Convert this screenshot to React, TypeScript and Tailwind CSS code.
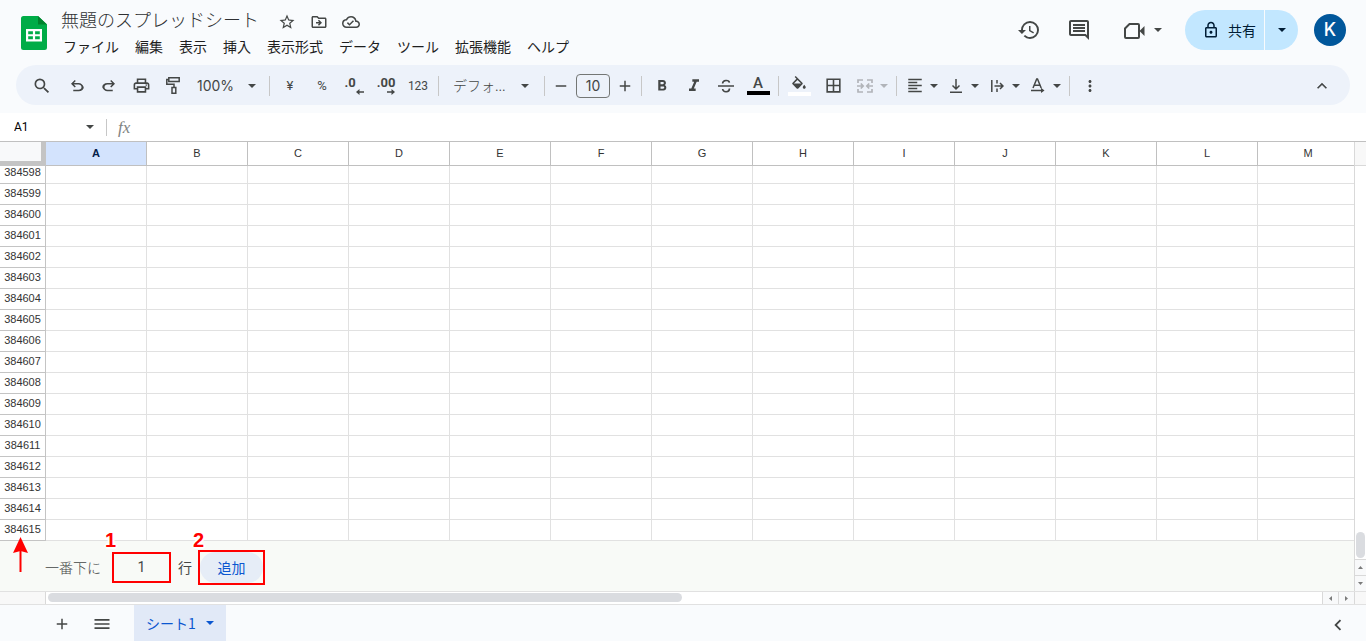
import React from 'react';
import {
  MdAdd,
  MdBorderAll,
  MdChevronLeft,
  MdFormatAlignLeft,
  MdFormatBold,
  MdFormatColorFill,
  MdFormatItalic,
  MdHistory,
  MdKeyboardArrowUp,
  MdMenu,
  MdMoreVert,
  MdOutlineCloudDone,
  MdOutlineComment,
  MdOutlineDriveFileMove,
  MdOutlineLock,
  MdOutlinePrint,
  MdRemove,
  MdSearch,
  MdStarBorder,
} from 'react-icons/md';

const MENUS = ['ファイル', '編集', '表示', '挿入', '表示形式', 'データ', 'ツール', '拡張機能', 'ヘルプ'];
const COLUMNS = ['A', 'B', 'C', 'D', 'E', 'F', 'G', 'H', 'I', 'J', 'K', 'L', 'M'];
const ROWS = Array.from({ length: 18 }, (_, i) => 384598 + i);

function Caret() {
  return (
    <svg className="h-1 w-2 shrink-0" viewBox="0 0 8 4" fill="currentColor" aria-hidden="true">
      <path d="M0 0h8L4 4z" />
    </svg>
  );
}

function Sep() {
  return <div className="mx-1 h-5 w-px shrink-0 bg-[#c7c7c7]" />;
}

function Tool({ label, children }: { label: string; children: React.ReactNode }) {
  return (
    <button type="button" aria-label={label} className="flex h-8 w-8 shrink-0 items-center justify-center">
      {children}
    </button>
  );
}

function DropTool({ label, muted, children }: { label: string; muted?: boolean; children: React.ReactNode }) {
  return (
    <button
      type="button"
      aria-label={label}
      className={
        'flex h-8 w-[41px] shrink-0 items-center justify-between pr-1 pl-[5px] ' + (muted ? 'text-[#b1b4b9]' : '')
      }
    >
      <span className="flex w-[18px] justify-center">{children}</span>
      <Caret />
    </button>
  );
}

function Logo() {
  return (
    <svg className="h-[34px] w-[26px] shrink-0" viewBox="0 0 26 34" aria-hidden="true">
      <path d="M2.500 0H17l9 8.500v23a2.500 2.500 0 0 1-2.500 2.500h-21A2.500 2.500 0 0 1 0 31.500V2.500A2.500 2.500 0 0 1 2.500 0z" fill="#00ac47" />
      <path d="M17 0l9 8.500h-9z" fill="#00832d" />
      <path d="M5 13h16v12.500H5zM7.200 15.200v3h4.700v-3zm6.900 0v3h4.700v-3zm-6.900 5.100v3h4.700v-3zm6.900 0v3h4.700v-3z" fill="#fff" fillRule="evenodd" />
    </svg>
  );
}

function Header() {
  return (
    <header className="flex h-[65px] items-start">
      <div className="pt-4 pl-[21px]">
        <Logo />
      </div>
      <div className="min-w-0 pt-[6px] pl-[14px]">
        <div className="flex items-center">
          <h1 className="text-[18px] leading-[27px] font-light whitespace-nowrap text-[#2e3032]">無題のスプレッドシート</h1>
          <div className="flex gap-[14px] pt-1 pl-[19px] text-[#444746]">
            <button type="button" aria-label="スター"><MdStarBorder size={18} /></button>
            <button type="button" aria-label="移動"><MdOutlineDriveFileMove size={18} /></button>
            <button type="button" aria-label="保存済み"><MdOutlineCloudDone size={18} /></button>
          </div>
        </div>
        <nav className="flex gap-4 pl-[2px] text-[14px] leading-[26px] whitespace-nowrap text-[#1f1f1f]">
          {MENUS.map((m) => (
            <button type="button" key={m}>{m}</button>
          ))}
        </nav>
      </div>
      <div className="ml-auto flex h-[60px] shrink-0 items-center pr-5 text-[#444746]">
        <button type="button" aria-label="変更履歴" className="flex w-10 justify-center"><MdHistory size={24} /></button>
        <button type="button" aria-label="コメント" className="ml-[10px] flex w-10 justify-center"><MdOutlineComment size={24} /></button>
        <button type="button" aria-label="会議" className="ml-[25px] flex items-center gap-[9px]">
          <svg className="mt-[2px] h-4 w-[21px]" viewBox="0 0 21 16" aria-hidden="true">
            <path d="M5.500 1h8.500a1 1 0 0 1 1 1v12a1 1 0 0 1-1 1H2a1 1 0 0 1-1-1V5.500z" fill="none" stroke="currentColor" strokeWidth="2" />
            <path d="M15.500 8L20.500 3v10z" fill="currentColor" />
          </svg>
          <Caret />
        </button>
        <div className="ml-[23px] flex h-10 gap-px text-[#001d35]">
          <button type="button" className="flex w-[79px] items-center gap-2 rounded-l-full bg-[#c2e7ff] pl-[17px] text-[14px]">
            <MdOutlineLock size={18} />
            <span>共有</span>
          </button>
          <button type="button" aria-label="共有オプション" className="flex w-[33px] items-center justify-center rounded-r-full bg-[#c2e7ff]">
            <Caret />
          </button>
        </div>
        <button type="button" className="ml-4 h-8 w-8 rounded-full bg-[#01579b] font-[Inter] text-[18px] leading-8 font-medium text-white">K</button>
      </div>
    </header>
  );
}

function Toolbar() {
  return (
    <div className="mx-4 mb-2 flex h-10 items-center overflow-hidden rounded-full bg-[#edf2fa] pt-px pr-3 pl-[10px] text-[#444746]">
      <Tool label="検索"><MdSearch size={20} /></Tool>
      <div className="ml-[3px] flex">
        <Tool label="元に戻す">
          <svg className="h-[18px] w-[18px]" viewBox="0 -960 960 960" fill="currentColor">
            <path d="M280-200v-80h284q63 0 109.500-40T720-420q0-60-46.500-100T564-560H312l104 104-56 56-200-200 200-200 56 56-104 104h252q97 0 169.500 63T840-420q0 94-72.500 157T564-200H280Z" />
          </svg>
        </Tool>
        <Tool label="やり直し">
          <svg className="h-[18px] w-[18px]" viewBox="0 -960 960 960" fill="currentColor">
            <path d="M396-200q-97 0-169.500-63T120-420q0-94 72.500-157T396-640h252L544-744l56-56 200 200-200 200-56-56 104-104H396q-63 0-109.500 40T240-420q0 60 46.500 100T396-280h284v80H396Z" />
          </svg>
        </Tool>
        <Tool label="印刷"><MdOutlinePrint size={19} /></Tool>
        <Tool label="書式を貼り付け">
          <svg className="h-[17px] w-[14px]" viewBox="0 0 14 17" fill="none" stroke="currentColor" strokeWidth="1.500">
            <path d="M2.800.8h10.400v3.600H2.800zM2.800 2.600H.8v4.600H8v3M6 10.500h3.800v5.700H6z" />
          </svg>
        </Tool>
      </div>
      <button type="button" className="flex w-[76px] shrink-0 items-center justify-between pr-[9px] pl-2 font-[Inter] text-[14px]">
        100%
        <Caret />
      </button>
      <Sep />
      <Tool label="通貨"><span className="font-[Roboto] text-[13px]">¥</span></Tool>
      <Tool label="パーセント"><span className="font-[Roboto] text-[13px]">%</span></Tool>
      <Tool label="小数点以下の桁数を減らす">
        <span className="flex flex-col pt-px">
          <span className="pr-2 font-[Roboto] text-[13px] leading-[12px] font-bold">.0</span>
          <svg className="h-[6px] w-2 self-end" viewBox="0 0 8 6" fill="currentColor"><path d="M0 3L3.500 0v2.200H8v1.600H3.500V6z" /></svg>
        </span>
      </Tool>
      <Tool label="小数点以下の桁数を増やす">
        <span className="flex flex-col pt-px">
          <span className="font-[Roboto] text-[13px] leading-[12px] font-bold">.00</span>
          <svg className="h-[6px] w-2 self-end" viewBox="0 0 8 6" fill="currentColor"><path d="M8 3L4.500 0v2.200H0v1.600h4.500V6z" /></svg>
        </span>
      </Tool>
      <Tool label="表示形式の詳細"><span className="font-[Roboto] text-[12px]">123</span></Tool>
      <Sep />
      <button type="button" className="flex w-[97px] shrink-0 items-center justify-between pr-[11px] pl-[10px] text-[14px] font-light">
        デフォ...
        <Caret />
      </button>
      <Sep />
      <button type="button" aria-label="縮小" className="flex w-6 shrink-0 justify-center"><MdRemove size={18} /></button>
      <input
        aria-label="フォントサイズ"
        defaultValue="10"
        className="mx-[3px] h-6 w-[34px] shrink-0 rounded-[4px] border border-[#747775] bg-transparent text-center font-[Inter] text-[14px]"
      />
      <button type="button" aria-label="拡大" className="flex w-6 shrink-0 justify-center"><MdAdd size={18} /></button>
      <Sep />
      <Tool label="太字"><MdFormatBold size={18} /></Tool>
      <Tool label="斜体"><MdFormatItalic size={20} /></Tool>
      <Tool label="取り消し線">
        <svg className="h-4 w-4" viewBox="0 0 16 16" fill="none" stroke="currentColor" strokeWidth="1.600">
          <path d="M0 8h16M4.600 5.600C4.600 1.600 11 1.600 11.400 4.600M4.600 11c.6 3.800 6.900 3.600 6.900-.6" />
        </svg>
      </Tool>
      <Tool label="テキストの色">
        <span className="flex w-[23px] flex-col items-center border-b-4 border-black font-[Roboto] text-[15px] leading-[15px] font-medium">A</span>
      </Tool>
      <Sep />
      <Tool label="塗りつぶしの色">
        <span className="flex w-[23px] flex-col items-center border-b-4 border-white pb-px">
          <MdFormatColorFill size={18} viewBox="0 0 24 20" className="h-[15px]" />
        </span>
      </Tool>
      <div className="mx-[2px]">
        <Tool label="枠線"><MdBorderAll size={19} /></Tool>
      </div>
      <DropTool label="セルを結合" muted>
        <svg className="h-[14px] w-4" viewBox="0 0 16 14" fill="none" stroke="currentColor" strokeWidth="1.700">
          <path d="M6 1H1v3M1 10v3h5M10 1h5v3M15 10v3h-5M0 7h6M3.800 4.500L6.200 7 3.800 9.500M16 7h-6M12.200 4.500L9.800 7l2.400 2.500" />
        </svg>
      </DropTool>
      <Sep />
      <DropTool label="水平方向の配置"><MdFormatAlignLeft size={19} /></DropTool>
      <DropTool label="垂直方向の配置">
        <svg className="h-[14px] w-3" viewBox="0 0 12 14" fill="none" stroke="currentColor" strokeWidth="1.500">
          <path d="M6 0v9.500M2.500 6.500L6 10l3.500-3.500M0 13.200h12" />
        </svg>
      </DropTool>
      <DropTool label="テキストを折り返す">
        <svg className="h-3 w-[13px]" viewBox="0 0 13 12" fill="none" stroke="currentColor" strokeWidth="1.500">
          <path d="M.8 0v12M6 0v3.500M6 8.500V12M3.500 6H12M9 3l3 3-3 3" />
        </svg>
      </DropTool>
      <DropTool label="テキストの回転">
        <svg className="h-[15px] w-[14px]" viewBox="0 0 14 15" fill="none" stroke="currentColor" strokeWidth="1.500">
          <path d="M2 10L5.700 1h.8L10.200 10M3.500 7.200h5.200M0 12.500h12" />
          <path d="M10 9.800l3.500 2.700L10 15z" fill="currentColor" stroke="none" />
        </svg>
      </DropTool>
      <Sep />
      <Tool label="その他"><MdMoreVert size={18} /></Tool>
      <div className="ml-auto">
        <Tool label="メニューを隠す"><MdKeyboardArrowUp size={20} /></Tool>
      </div>
    </div>
  );
}

function FormulaBar() {
  return (
    <div className="flex h-[29px] items-center border-b border-[#c0c0c0] bg-white">
      <input aria-label="名前ボックス" defaultValue="A1" className="w-[72px] pl-[14px] font-[Roboto] text-[12px] text-black" />
      <button type="button" aria-label="名前付き範囲" className="flex w-[34px] justify-center pl-[2px] text-[#444746]"><Caret /></button>
      <div className="h-[17px] w-px bg-[#c7c7c7]" />
      <label htmlFor="formula" className="pt-px pl-[11px] font-['Liberation_Serif'] text-[17px] leading-5 text-[#808382] italic">fx</label>
      <input id="formula" className="ml-2 min-w-0 flex-1 text-[13px] outline-none" />
    </div>
  );
}

function Grid() {
  return (
    <table className="w-full table-fixed border-separate border-spacing-0 bg-white font-['Liberation_Sans'] text-[11px] leading-[13px] text-[#333]">
      <colgroup>
        <col className="w-[46px]" />
        {COLUMNS.map((c) => (
          <col key={c} className={c === 'M' ? '' : 'w-[101px]'} />
        ))}
      </colgroup>
      <thead>
        <tr className="h-6">
          <th aria-label="すべて選択" className="border-r-[5px] border-b-[5px] border-[#c4c4c4] bg-[#f8f9fa] p-0" />
          {COLUMNS.map((c) => (
            <th
              key={c}
              scope="col"
              className={
                'border-b border-[#c0c0c0] p-0 ' +
                (c === 'M' ? 'pl-1 font-normal' : c === 'A' ? 'border-r bg-[#d3e3fd] font-bold text-[#041e49]' : 'border-r font-normal')
              }
            >
              {c}
            </th>
          ))}
        </tr>
      </thead>
      <tbody>
        {ROWS.map((r, i) => (
          <tr key={r} className={i === 0 ? 'h-[18px]' : 'h-[21px]'}>
            <th scope="row" className="border-r border-b border-[#c4c4c4] p-0 pb-1 align-bottom font-normal">{r}</th>
            {COLUMNS.map((c) => (
              <td key={c} className={c === 'M' ? 'border-b border-[#e1e1e1] p-0' : 'border-r border-b border-[#e1e1e1] p-0'} />
            ))}
          </tr>
        ))}
      </tbody>
    </table>
  );
}

function StepNumber({ children }: { children: React.ReactNode }) {
  return (
    <span className="absolute -top-6 -left-[7px] z-10 font-['Liberation_Sans'] text-[20px] leading-6 font-bold text-[#f00] [text-shadow:2px_0_#fff,-2px_0_#fff,0_2px_#fff,0_-2px_#fff,1px_1px_#fff,-1px_-1px_#fff]">
      {children}
    </span>
  );
}

function AddRows() {
  return (
    <div className="relative flex h-[50px] items-center bg-[#f8faf7] pt-[2px] pl-[45px] text-[14px] text-[#444746]">
      <svg className="absolute -top-[4px] left-[13px] h-9 w-4" viewBox="0 0 16 36" aria-hidden="true">
        <path d="M7.500 12v23" stroke="#f00" strokeWidth="2" />
        <path d="M7.500 0L15 16 7.500 14 0 16z" fill="#f00" />
      </svg>
      <label htmlFor="rows" className="w-[67px] font-light">一番下に</label>
      <div className="relative">
        <StepNumber>1</StepNumber>
        <input id="rows" defaultValue="1" className="block h-[31px] w-[59px] border-2 border-[#f00] text-center font-[Roboto] text-[14px]" />
      </div>
      <span className="w-[27px] pl-[7px]">行</span>
      <div className="relative border-2 border-[#f00]">
        <StepNumber>2</StepNumber>
        <button type="button" className="block h-[31px] w-[63px] rounded-full bg-[#e6edf7] text-[#0b57d0]">追加</button>
      </div>
    </div>
  );
}

function ScrollArrow({ label, d }: { label: string; d: string }) {
  return (
    <button type="button" aria-label={label} className="flex h-full w-full items-center justify-center bg-[#f8f9fa] text-[#7b7b7b]">
      <svg className="h-[5px] w-[5px]" viewBox="0 0 5 5" fill="currentColor"><path d={d} /></svg>
    </button>
  );
}

export default function App() {
  return (
    <div className="flex min-h-screen flex-col bg-[#f9fbfd] font-['Noto_Sans_CJK_JP',sans-serif]">
      <Header />
      <Toolbar />
      <FormulaBar />
      <main>
        <div className="flex border-b border-[#e1e1e1]">
          <div className="min-w-0 flex-1">
            <Grid />
            <AddRows />
          </div>
          <div className="flex w-3 flex-col border-l border-[#d9d9d9] bg-white">
            <div className="h-6 border-b border-[#d9d9d9] bg-[#f8f8f8]" />
            <div className="flex flex-1 flex-col justify-end px-px pb-px">
              <div className="h-[26px] rounded-full bg-[#dadce0]" />
            </div>
            <div className="h-4 border-t border-[#d9d9d9]"><ScrollArrow label="上へ" d="M0 4h5L2.500 1z" /></div>
            <div className="h-4 border-t border-[#d9d9d9]"><ScrollArrow label="下へ" d="M0 1h5L2.500 4z" /></div>
          </div>
        </div>
        <div className="flex h-3 bg-white">
          <div className="w-[46px] border-r border-[#d9d9d9] bg-[#f8f8f8]" />
          <div className="flex flex-1 items-start pt-px pl-[2px]">
            <div className="h-[9px] w-1/2 max-w-[634px] rounded-full bg-[#dadce0]" />
          </div>
          <div className="w-4 border-l border-[#d9d9d9]"><ScrollArrow label="左へ" d="M4 0v5L1 2.500z" /></div>
          <div className="w-4 border-l border-[#d9d9d9]"><ScrollArrow label="右へ" d="M1 0v5l3-2.500z" /></div>
          <div className="w-3 border-l border-[#d9d9d9] bg-[#f8f8f8]" />
        </div>
      </main>
      <footer className="flex flex-1 items-stretch border-t border-[#e1e1e1] pl-[42px] text-[#444746]">
        <button type="button" aria-label="シートを追加" className="flex h-9 w-10 items-center justify-center pt-px"><MdAdd size={18} /></button>
        <button type="button" aria-label="すべてのシート" className="flex h-9 w-10 items-center justify-center pt-px"><MdMenu size={20} /></button>
        <button type="button" className="ml-3 flex h-9 w-[92px] items-center justify-between bg-[#e1e9f7] px-3 text-[14px] text-[#0b57d0]">
          シート1
          <Caret />
        </button>
        <button type="button" aria-label="サイドパネルを表示" className="mr-4 ml-auto flex h-9 w-6 items-center justify-center pt-1"><MdChevronLeft size={22} /></button>
      </footer>
    </div>
  );
}
